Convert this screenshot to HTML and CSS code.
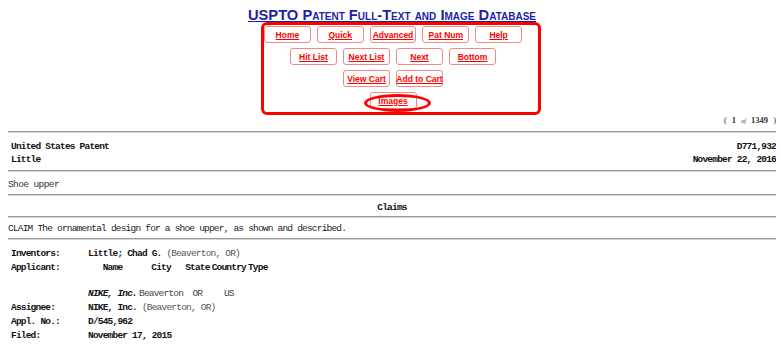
FILE: index.html
```html
<!DOCTYPE html>
<html lang="en">
	<head>
		<meta charset="UTF-8" />
		<title>United States Patent: D771932</title>
		<link rel="stylesheet" href="styles.css">
	</head>
	<body>
		<div class="title"><a href="#">USPTO Patent Full-Text and Image Database</a></div>
		<div class="nav">
			<div class="row">
				<a class="btn" href="#">Home</a>
				<a class="btn" href="#">Quick</a>
				<a class="btn" href="#">Advanced</a>
				<a class="btn" href="#">Pat Num</a>
				<a class="btn" href="#">Help</a>
			</div>
			<div class="row">
				<a class="btn" href="#">Hit List</a>
				<a class="btn" href="#">Next List</a>
				<a class="btn" href="#">Next</a>
				<a class="btn" href="#">Bottom</a>
			</div>
			<div class="row">
				<a class="btn" href="#">View Cart</a>
				<a class="btn" href="#">Add to Cart</a>
			</div>
			<div class="row">
				<a class="btn images" href="#">Images</a>
			</div>
		</div>
		<div class="count">( <b>1</b> <i>of</i> <b>1349</b> )</div>
		<hr class="rule" />
		<div class="head">
			<div class="line"><b>United States Patent</b><b>D771,932</b></div>
			<div class="line"><b>Little</b><b>November 22, 2016</b></div>
		</div>
		<hr class="rule" />
		<div class="name">Shoe upper</div>
		<hr class="rule" />
		<div class="center"><b>Claims</b></div>
		<hr class="rule" />
		<div class="claim">CLAIM The ornamental design for a shoe upper, as shown and described.</div>
		<hr class="rule" />
		<table class="info">
			<tr>
				<th class="lbl">Inventors:</th>
				<td><b>Little; Chad G.</b> <span class="loc">(Beaverton, OR)</span></td>
			</tr>
			<tr>
				<th class="lbl">Applicant:</th>
				<td>
					<table class="appl">
						<tr>
							<th>Name</th><th>City</th><th>State</th><th>Country</th><th>Type</th>
						</tr>
						<tr class="blank"><td colspan="5"></td></tr>
						<tr>
							<td><b><i>NIKE, Inc.</i></b></td><td>Beaverton</td><td>OR</td><td>US</td><td></td>
						</tr>
					</table>
				</td>
			</tr>
			<tr>
				<th class="lbl">Assignee:</th>
				<td><b>NIKE, Inc.</b> <span class="loc">(Beaverton, OR)</span></td>
			</tr>
			<tr>
				<th class="lbl">Appl. No.:</th>
				<td><b>D/545,962</b></td>
			</tr>
			<tr>
				<th class="lbl">Filed:</th>
				<td><b>November 17, 2015</b></td>
			</tr>
		</table>
	</body>
</html>
```

FILE: styles.css
```css
body {
	margin: 8px 5px 0 8px;
	font-family: "Liberation Mono", "Noto Sans CJK SC", monospace;
	font-size: 9.5px;
	letter-spacing: -0.8px;
	color: #111;
	background: #fff;
}
.title {
	text-align: center;
	line-height: 14px;
	font-family: "Liberation Sans", Arial, sans-serif;
	font-size: 14.7px;
	font-weight: bold;
	font-variant: small-caps;
	letter-spacing: 0;
}
.title a {
	color: #1f1fa8;
}
/* red marking box round the buttons */
.nav {
	width: 280px;
	margin-left: calc(50% - 131px);
	border: 3px solid #f00;
	border-radius: 6px;
	padding: 1px 16px 3px 0;
	box-sizing: border-box;
	display: flex;
	flex-direction: column;
	gap: 5px;
}
.row {
	display: flex;
	justify-content: center;
	gap: 6px;
}
.btn {
	width: 47px;
	height: 17px;
	box-sizing: border-box;
	border: 1px solid #f08a8a;
	border-radius: 3px;
	display: flex;
	align-items: center;
	justify-content: center;
	font-family: "Liberation Sans", Arial, sans-serif;
	font-size: 8.5px;
	font-weight: bold;
	letter-spacing: 0;
	color: #f00;
	white-space: nowrap;
}
.images {
	position: relative;
}
.images::after {
	content: "";
	position: absolute;
	left: -7px;
	top: 1px;
	width: 67px;
	height: 18px;
	box-sizing: border-box;
	border: 3px solid #f00;
	border-radius: 50%;
}
.count {
	text-align: right;
	line-height: 10px;
	margin-bottom: 5px;
	font-family: "Liberation Serif", serif;
	font-size: 8.5px;
	letter-spacing: 0;
	word-spacing: 3px;
	color: #333;
}
.count i {
	font-size: 6px;
}
.rule {
	height: 0;
	border: 0;
	border-top: 1px solid #999;
	border-bottom: 1px solid #d6d6d6;
	margin: 0;
}
.head {
	margin: 7px 0 4px;
	padding-left: 3px;
}
.line {
	display: flex;
	justify-content: space-between;
	line-height: 13px;
}
.name {
	line-height: 13px;
	margin: 6px 0 3px;
	letter-spacing: -0.6px;
	color: #333;
}
.center {
	text-align: center;
	line-height: 13px;
	margin: 5px 0 2px;
}
.claim {
	line-height: 13px;
	margin: 4px 0 3px;
	color: #222;
}
.info {
	border-collapse: collapse;
	margin: 7px 0 0 3px;
}
.info td {
	padding: 0;
	line-height: 14px;
	vertical-align: top;
}
.lbl {
	text-align: left;
	vertical-align: top;
	width: 77px;
	padding: 0;
	line-height: 14px;
}
.loc {
	color: #555;
}
.appl {
	border-collapse: separate;
	border-spacing: 2px 0;
	margin-left: -2px;
}
.appl th,
.appl td {
	text-align: center;
	padding: 0;
	line-height: 14px;
	font-weight: bold;
}
.appl td {
	font-weight: normal;
	color: #444;
}
.appl td b {
	color: #111;
}
.appl .blank td {
	height: 12px;
	line-height: 12px;
}
```
